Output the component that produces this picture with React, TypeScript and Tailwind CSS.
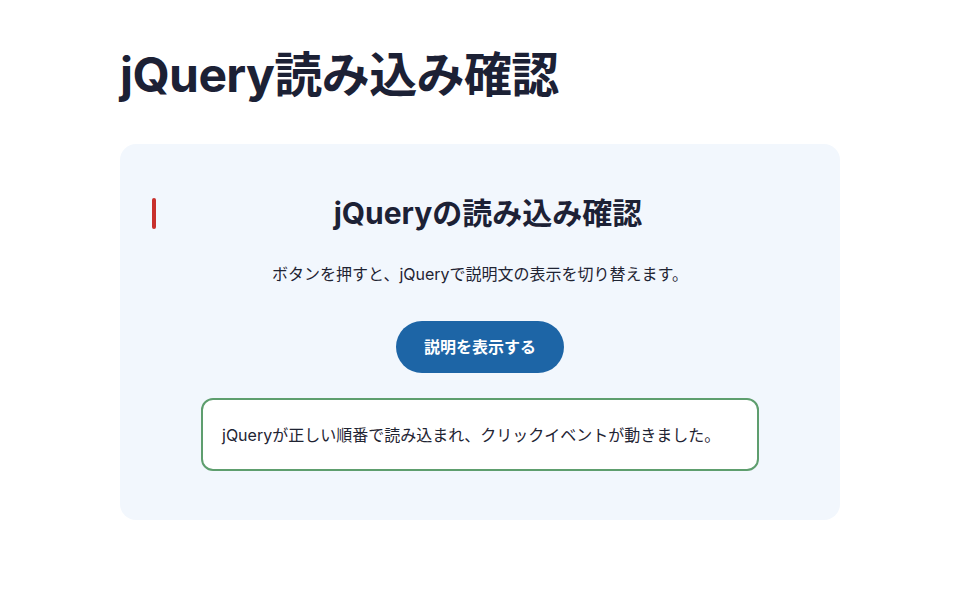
export default function App() {
  return (
    <div
      className="min-h-screen bg-white text-[#1c2135]"
      style={{ fontFamily: 'Inter, "Noto Sans CJK JP", sans-serif' }}
    >
      <div className="mx-auto w-[720px] pt-[46px]">
        <h1 className="text-[48px] font-bold leading-[58px] tracking-[-0.6px]">jQuery読み込み確認</h1>

        <section className="mt-[40px] rounded-2xl bg-[#f2f7fd] px-8 pb-[49px] pt-[54px]">
          <div className="flex items-stretch">
            <div className="w-1 rounded-full bg-[#c8302c]" />
            <h2 className="flex-1 pl-3 text-center text-[30px] font-bold leading-[31px]">
              jQueryの読み込み確認
            </h2>
          </div>

          <p className="mt-[33px] text-center text-[16px] leading-6 text-[#1f2433]">
            ボタンを押すと、jQueryで説明文の表示を切り替えます。
          </p>

          <div className="mt-[35px] flex justify-center">
            <button
              type="button"
              className="h-[52px] w-[168px] rounded-full bg-[#1d65a6] text-[16px] font-bold text-white"
            >
              説明を表示する
            </button>
          </div>

          <div className="mx-auto mt-[25px] w-[558px] rounded-xl border-2 border-[#5e9e6e] bg-white px-[19px] py-[22.5px]">
            <p className="text-[16px] leading-6 text-[#1f2433]">
              jQueryが正しい順番で読み込まれ、クリックイベントが動きました。
            </p>
          </div>
        </section>
      </div>
    </div>
  );
}
